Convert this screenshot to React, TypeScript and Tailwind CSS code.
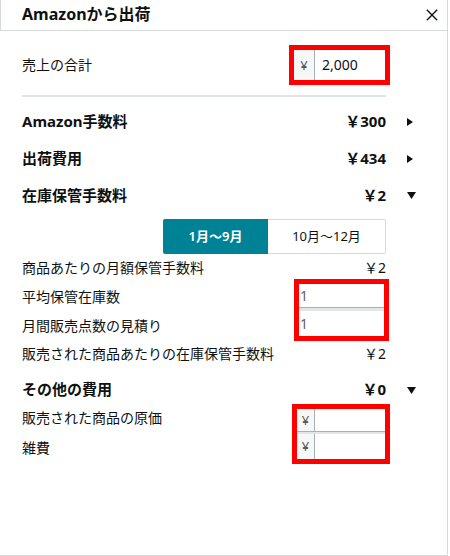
import React from "react";

function TriRight() {
  return (
    <svg width="6" height="8" viewBox="0 0 6 8">
      <polygon points="0,0 6,4 0,8" fill="#0f1111" />
    </svg>
  );
}

function TriDown() {
  return (
    <svg width="9" height="7" viewBox="0 0 9 7">
      <polygon points="0,0 9,0 4.5,7" fill="#0f1111" />
    </svg>
  );
}

function CloseIcon() {
  return (
    <svg width="12" height="12" viewBox="0 0 12 12">
      <path d="M0.8 0.8 L11.2 11.2 M11.2 0.8 L0.8 11.2" stroke="#0f1111" strokeWidth="1.4" fill="none" />
    </svg>
  );
}

function SectionRow({ label, value, open }: { label: string; value: string; open?: boolean }) {
  return (
    <div className="flex h-[37px] items-center">
      <div className="flex-1 text-[15px] font-bold leading-[1.2]">{label}</div>
      <div className="text-[15px] font-bold leading-[1.2]">{value}</div>
      <div className="flex w-[34px] items-center pl-[21px] pt-[2px]">{open ? <TriDown /> : <TriRight />}</div>
    </div>
  );
}

function Prefix({ w }: { w: string }) {
  return (
    <div
      className={`flex ${w} items-center justify-center border-r border-[#a6b3b5] bg-[#f6f7f7] text-[13px] leading-none text-[#565959]`}
    >
      ¥
    </div>
  );
}

export default function App() {
  return (
    <div className="h-[556px] w-[448px] border-r border-b border-[#d5d9d9] bg-white font-['Noto_Sans','Noto_Sans_CJK_JP',sans-serif] text-[#0f1111]">
      <div className="flex h-[31px] items-center justify-between border-b border-l border-[#d5d9d9] pl-[21px] pr-[9px]">
        <div className="text-[16px] font-bold leading-[1.2]">Amazonから出荷</div>
        <CloseIcon />
      </div>

      <div className="w-[420px] pl-[22px]">
        <div className="mt-[14px] flex h-[40px] items-center">
          <div className="flex-1 text-[14px] leading-[1.2]">売上の合計</div>
          <div className="flex h-[40px] w-[101px] border-[5px] border-[#ff0000] bg-white">
            <Prefix w="w-[21px]" />
            <div className="flex flex-1 items-center pl-[7px] text-[14px] leading-none">2,000</div>
          </div>
          <div className="w-[30px]" />
        </div>

        <div className="mr-[34px] mt-[10px] h-[2px] bg-[#dfe5e5]" />

        <div className="mt-[5px]">
          <SectionRow label="Amazon手数料" value="￥300" />
          <SectionRow label="出荷費用" value="￥434" />
          <SectionRow label="在庫保管手数料" value="￥2" open />
        </div>

        <div className="ml-[141px] mt-[6px] flex h-[35px] w-[223px] text-[13px] leading-none">
          <div className="flex w-[105px] items-center justify-center rounded-l-[2px] bg-[#008296] font-semibold text-white">
            1月〜9月
          </div>
          <div className="flex flex-1 items-center justify-center rounded-r-[2px] border border-l-0 border-[#d5d9d9]">
            10月〜12月
          </div>
        </div>

        <div className="flex h-[25px] items-center pt-[3px] text-[14px] leading-[1.2]">
          <div className="flex-1">商品あたりの月額保管手数料</div>
          <div>￥2</div>
          <div className="w-[34px]" />
        </div>

        <div className="flex text-[14px] leading-[1.2]">
          <div className="flex flex-1 flex-col">
            <div className="flex h-[36px] items-center">平均保管在庫数</div>
            <div className="flex h-[22px] items-center">月間販売点数の見積り</div>
          </div>
          <div className="flex h-[62px] w-[95px] flex-col border-[5px] border-[#ff0000] bg-white">
            <div className="flex h-[24px] items-center border-b border-[#a6b3b5] pl-[1px] leading-none text-[#5f6363]">1</div>
            <div className="h-[3px] bg-[#e3e6e6]" />
            <div className="flex flex-1 items-center pl-[1px] leading-none text-[#5f6363]">1</div>
          </div>
          <div className="w-[31px]" />
        </div>

        <div className="flex h-[26px] items-center text-[14px] leading-[1.2]">
          <div className="flex-1">販売された商品あたりの在庫保管手数料</div>
          <div>￥2</div>
          <div className="w-[34px]" />
        </div>

        <div className="flex h-[37px] items-center pt-[7px]">
          <div className="flex-1 text-[15px] font-bold leading-[1.2]">その他の費用</div>
          <div className="text-[15px] font-bold leading-[1.2]">￥0</div>
          <div className="flex w-[34px] items-center pl-[21px] pt-[2px]">
            <TriDown />
          </div>
        </div>

        <div className="flex text-[14px] leading-[1.2]">
          <div className="flex flex-1 flex-col">
            <div className="flex h-[28px] items-center">販売された商品の原価</div>
            <div className="flex h-[32px] items-center">雑費</div>
          </div>
          <div className="flex h-[60px] w-[98px] flex-col border-[5px] border-[#ff0000] bg-white">
            <div className="flex h-[23px] border-b border-[#a6b3b5]">
              <Prefix w="w-[18px]" />
              <div className="flex-1" />
            </div>
            <div className="h-[2px] bg-[#e3e6e6]" />
            <div className="flex flex-1">
              <Prefix w="w-[18px]" />
              <div className="flex-1" />
            </div>
          </div>
          <div className="w-[30px]" />
        </div>
      </div>
    </div>
  );
}
